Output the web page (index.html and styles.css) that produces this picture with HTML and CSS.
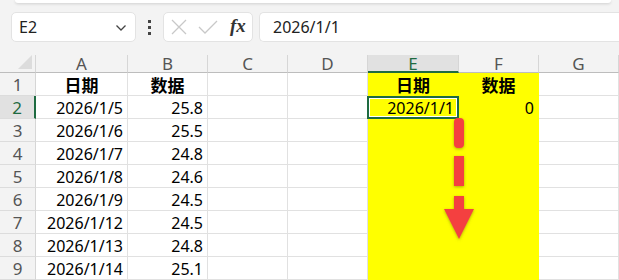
FILE: index.html
```html
<!DOCTYPE html>
<html lang="zh-CN">
<head>
    <meta charset="UTF-8">
    <title>Sheet</title>
    <link rel="stylesheet" href="styles.css">
</head>
<body>
    <div class="app">
        <div class="ribbon-edge"></div>

        <div class="formula-row">
            <div class="name-box">
                <span>E2</span>
                <svg class="chevron" width="12" height="8" viewBox="0 0 12 8"><path d="M1.5 1.5 L6 6 L10.5 1.5" fill="none" stroke="#444" stroke-width="1.3"/></svg>
            </div>
            <div class="grip">
                <span></span><span></span><span></span>
            </div>
            <div class="fx-buttons">
                <svg width="16" height="16" viewBox="0 0 16 16"><path d="M1 1 L15 15 M15 1 L1 15" stroke="#c8c8c8" stroke-width="1.3" fill="none"/></svg>
                <svg width="20" height="16" viewBox="0 0 20 16"><path d="M1 8 L7 14 L19 2" stroke="#c8c8c8" stroke-width="1.3" fill="none"/></svg>
                <span class="fx">fx</span>
            </div>
            <div class="formula-input">2026/1/1</div>
        </div>

        <div class="sheet">
            <div class="corner"><svg width="14" height="14" viewBox="0 0 14 14"><path d="M14 0 L14 14 L0 14 Z" fill="#dcdcdc"/></svg></div>
            <div class="col-head">A</div>
            <div class="col-head">B</div>
            <div class="col-head">C</div>
            <div class="col-head">D</div>
            <div class="col-head selected">E</div>
            <div class="col-head">F</div>
            <div class="col-head">G</div>

            <div class="row-head">1</div>
            <div class="cell center bold">日期</div>
            <div class="cell center bold">数据</div>
            <div class="cell"></div>
            <div class="cell"></div>
            <div class="cell center bold fill">日期</div>
            <div class="cell center bold fill">数据</div>
            <div class="cell"></div>

            <div class="row-head selected">2</div>
            <div class="cell num">2026/1/5</div>
            <div class="cell num">25.8</div>
            <div class="cell"></div>
            <div class="cell"></div>
            <div class="cell num fill active">2026/1/1</div>
            <div class="cell num fill">0</div>
            <div class="cell"></div>

            <div class="row-head">3</div>
            <div class="cell num">2026/1/6</div>
            <div class="cell num">25.5</div>
            <div class="cell"></div>
            <div class="cell"></div>
            <div class="cell fill"></div>
            <div class="cell fill"></div>
            <div class="cell"></div>

            <div class="row-head">4</div>
            <div class="cell num">2026/1/7</div>
            <div class="cell num">24.8</div>
            <div class="cell"></div>
            <div class="cell"></div>
            <div class="cell fill"></div>
            <div class="cell fill"></div>
            <div class="cell"></div>

            <div class="row-head">5</div>
            <div class="cell num">2026/1/8</div>
            <div class="cell num">24.6</div>
            <div class="cell"></div>
            <div class="cell"></div>
            <div class="cell fill"></div>
            <div class="cell fill"></div>
            <div class="cell"></div>

            <div class="row-head">6</div>
            <div class="cell num">2026/1/9</div>
            <div class="cell num">24.5</div>
            <div class="cell"></div>
            <div class="cell"></div>
            <div class="cell fill"></div>
            <div class="cell fill"></div>
            <div class="cell"></div>

            <div class="row-head">7</div>
            <div class="cell num">2026/1/12</div>
            <div class="cell num">24.5</div>
            <div class="cell"></div>
            <div class="cell"></div>
            <div class="cell fill"></div>
            <div class="cell fill"></div>
            <div class="cell"></div>

            <div class="row-head">8</div>
            <div class="cell num">2026/1/13</div>
            <div class="cell num">24.8</div>
            <div class="cell"></div>
            <div class="cell"></div>
            <div class="cell fill"></div>
            <div class="cell fill"></div>
            <div class="cell"></div>

            <div class="row-head">9</div>
            <div class="cell num">2026/1/14</div>
            <div class="cell num">25.1</div>
            <div class="cell"></div>
            <div class="cell"></div>
            <div class="cell fill"></div>
            <div class="cell fill"></div>
            <div class="cell"></div>

            <!-- fill-down arrow drawn over the yellow range -->
            <svg class="fill-arrow" width="40" height="130" viewBox="0 0 40 130">
                <defs>
                    <filter id="shade" x="-50%" y="-20%" width="200%" height="140%">
                        <feDropShadow dx="0" dy="1" stdDeviation="1.5" flood-color="#6b6b00" flood-opacity="0.55"/>
                    </filter>
                </defs>
                <g fill="#f44040" filter="url(#shade)">
                    <rect x="15" y="2" width="10" height="30" rx="4"/>
                    <rect x="15" y="40" width="10" height="30"/>
                    <rect x="15" y="80" width="10" height="15"/>
                    <path d="M5 93 L35 93 L20 123 Z"/>
                </g>
            </svg>
        </div>
    </div>
</body>
</html>
```

FILE: styles.css
```css
* {
    margin: 0;
    padding: 0;
    box-sizing: border-box;
}

body {
    width: 619px;
    height: 280px;
    overflow: hidden;
    background: #f3f3f3;
    font-family: "Noto Sans", "Noto Sans CJK SC", sans-serif;
    color: #000;
}

.app {
    display: flex;
    flex-direction: column;
}

.ribbon-edge {
    height: 3px;
    margin: 0 8px 0 15px;
    background: #fff;
    border-radius: 0 0 6px 6px;
    box-shadow: 0 1px 3px rgba(0, 0, 0, 0.15);
}

/* formula bar */
.formula-row {
    display: flex;
    align-items: center;
    height: 30px;
    margin-top: 9px;
    padding-left: 11px;
}

.name-box {
    width: 125px;
    height: 30px;
    background: #fff;
    border: 1px solid #e3e3e3;
    border-radius: 5px;
    display: flex;
    align-items: center;
    justify-content: space-between;
    padding: 0 8px 0 7px;
    font-size: 16px;
    color: #222;
}

.chevron {
    margin-top: 2px;
}

.grip {
    width: 27px;
    display: flex;
    flex-direction: column;
    align-items: center;
    gap: 3px;
}

.grip span {
    width: 3px;
    height: 3px;
    background: #444;
}

.fx-buttons {
    width: 90px;
    height: 30px;
    background: #fff;
    border: 1px solid #e3e3e3;
    border-radius: 5px;
    display: flex;
    align-items: center;
    padding: 0 6px 0 7px;
    gap: 11px;
}

.fx {
    font-family: "Liberation Serif", serif;
    font-style: italic;
    font-weight: bold;
    font-size: 19px;
    color: #333;
    margin-left: 1px;
    margin-top: -2px;
}

.formula-input {
    flex: 1;
    height: 30px;
    margin-left: 6px;
    background: #fff;
    border: 1px solid #e3e3e3;
    border-right: none;
    border-radius: 5px 0 0 5px;
    display: flex;
    align-items: center;
    padding-left: 13px;
    font-size: 16px;
    color: #222;
}

/* grid */
.sheet {
    position: relative;
    margin-top: 13px;
    display: grid;
    grid-template-columns: 36px 92px 80px 80px 80px 91px 80px 80px;
    grid-template-rows: 18px repeat(9, 23px);
    background: #fff;
}

.corner {
    background: #f3f3f3;
    border-right: 1px solid #d6d6d6;
    border-bottom: 1px solid #bdbdbd;
    display: flex;
    align-items: flex-end;
    justify-content: flex-end;
    padding: 0 3px 3px 0;
}

.col-head {
    background: #f3f3f3;
    border-right: 1px solid #d6d6d6;
    border-bottom: 1px solid #bdbdbd;
    display: flex;
    align-items: center;
    justify-content: center;
    font-size: 17px;
    color: #555;
    line-height: 1;
}

.col-head.selected {
    background: #e1e1e1;
    color: #1e6b41;
    border-bottom: 2px solid #1e6b41;
}

.row-head {
    background: #f3f3f3;
    border-right: 1px solid #d6d6d6;
    border-bottom: 1px solid #dcdcdc;
    display: flex;
    align-items: center;
    justify-content: center;
    font-size: 17px;
    color: #555;
    padding-top: 1px;
}

.row-head.selected {
    background: #e1e1e1;
    color: #1e6b41;
    border-right: 2px solid #1e6b41;
}

.cell {
    border-right: 1px solid #e1e1e1;
    border-bottom: 1px solid #e1e1e1;
    display: flex;
    align-items: center;
    font-size: 16px;
    padding: 1px 4px 0;
    white-space: nowrap;
}

.cell.num {
    justify-content: flex-end;
}

.cell.center {
    justify-content: center;
}

.cell.bold {
    font-weight: bold;
    font-size: 17px;
}

.cell.fill {
    background: #ffff00;
    border-color: #ffff00;
}

.cell.active {
    border: 2px solid #1e6b41;
    box-shadow: inset 0 0 0 1px #fff;
    padding-right: 3px;
    margin-left: -1px;
}

.fill-arrow {
    position: absolute;
    left: 439px;
    top: 61px;
}
```
